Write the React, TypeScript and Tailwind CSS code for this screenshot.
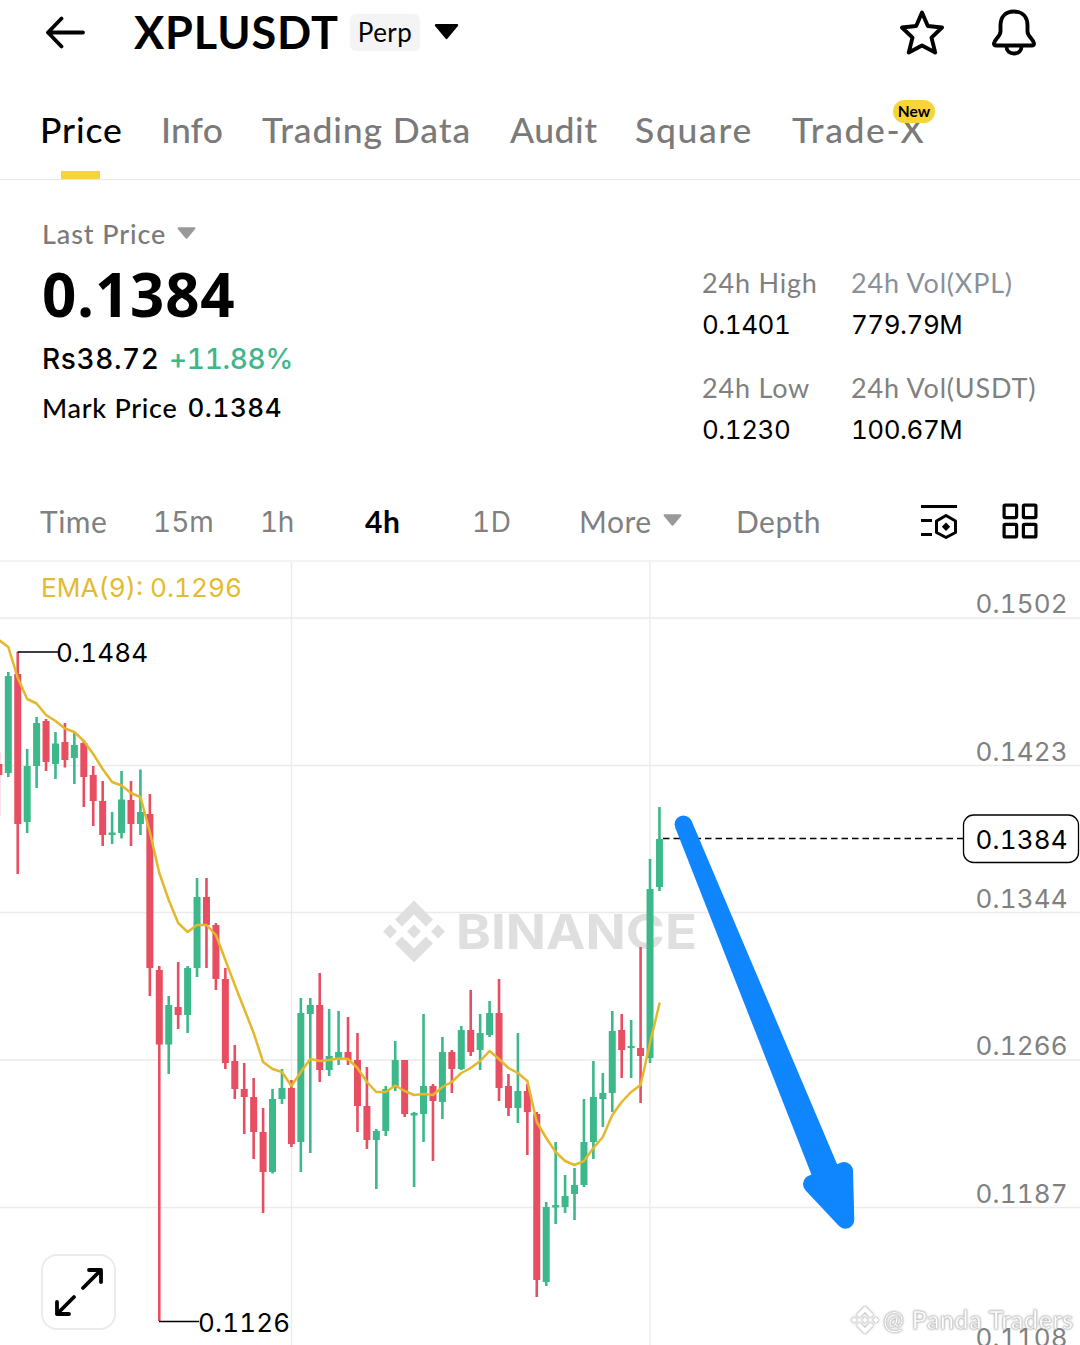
import React from 'react';
import { SiBinance } from 'react-icons/si';

type Candle = [up: number, high: number, top: number, bottom: number, low: number];

const STEP = 9.437;
const FIRST_X = 8.3;
const xOf = (i: number) => FIRST_X + (i - 1) * STEP;

// [up, high, body top, body bottom, low]
const candles: Candle[] = [
  [0, 752, 764, 775, 816], [1, 672, 676, 773, 777], [0, 652, 674, 824, 874], [1, 749, 766, 822, 833],
  [1, 717, 723, 766, 788], [0, 719, 721, 762, 771], [1, 732, 743.5, 764, 779], [0, 723, 742, 760, 767.5],
  [1, 732, 745, 758, 784], [0, 740, 743, 777, 807], [0, 766, 775, 801, 826], [0, 781, 801, 835, 846],
  [1, 812, 832.5, 835, 844], [1, 771, 799.5, 833, 838.5], [0, 781, 800, 824, 846], [1, 769.5, 812, 824, 835],
  [0, 794, 814, 968, 996], [0, 966, 970, 1044.5, 1321], [1, 996, 1005, 1044.5, 1074], [0, 962, 1007, 1015, 1029],
  [1, 966, 968, 1015, 1033], [1, 878, 897, 968, 977], [0, 878, 897, 925, 968], [0, 923, 925, 979, 990],
  [0, 968, 979, 1063, 1069], [0, 1045, 1061, 1089, 1099], [0, 1063, 1089, 1097, 1134], [0, 1078, 1097, 1132, 1159],
  [0, 1108, 1132, 1172, 1213], [1, 1089, 1099, 1172, 1173.5], [1, 1069, 1088, 1099, 1104], [0, 1080, 1088, 1144, 1147],
  [1, 998, 1013, 1142, 1172], [1, 998, 1005, 1014, 1153], [0, 973, 1005, 1070, 1082], [1, 1009, 1056, 1070, 1076],
  [1, 1011, 1052, 1059, 1065], [0, 1017, 1052, 1060, 1065], [0, 1033, 1060, 1106, 1132], [0, 1067, 1106, 1140, 1149],
  [1, 1129, 1131, 1140, 1189], [1, 1086, 1089, 1131, 1136], [1, 1041, 1060, 1088, 1091], [0, 1060, 1060, 1114, 1117],
  [1, 1112, 1113, 1115.5, 1187], [1, 1014, 1086, 1114, 1142], [0, 1084, 1086, 1101, 1161], [1, 1037, 1052, 1102, 1119],
  [0, 1050, 1052, 1069, 1093], [1, 1026, 1030, 1069, 1070], [0, 990, 1030, 1052, 1056], [1, 1014, 1033, 1050, 1070],
  [1, 1001, 1013, 1035, 1037], [0, 979, 1013, 1088, 1101], [0, 1074, 1086, 1108, 1116], [1, 1033, 1091, 1108, 1123],
  [0, 1084, 1091, 1112, 1155], [0, 1112, 1114, 1280, 1297], [1, 1202, 1207, 1282, 1286], [1, 1142, 1205, 1207.5, 1224],
  [1, 1175, 1196, 1207, 1213], [1, 1168, 1185, 1194, 1220], [1, 1099, 1142, 1185, 1187], [1, 1061, 1097, 1142, 1159],
  [1, 1073, 1093, 1099, 1127], [1, 1011, 1031, 1093, 1112], [0, 1014, 1030, 1050, 1078], [1, 1020, 1046, 1048, 1078],
  [0, 947, 1048, 1056, 1103], [1, 859, 889, 1058, 1063], [1, 807, 839, 887, 891],
];

const ema = [
  640, 647, 678, 699, 703.5, 715, 721, 728.5, 732, 741, 754, 769, 782, 785.5, 793, 797, 832, 873, 900, 923, 932, 925,
  925, 935, 960, 985, 1009, 1033, 1062, 1069, 1072, 1086, 1072, 1059, 1061, 1060, 1058.5, 1059, 1068, 1082, 1092, 1092,
  1085.5, 1091, 1095, 1094, 1095, 1087, 1082, 1073, 1068, 1061, 1051, 1059, 1068, 1073, 1081, 1122, 1138, 1152, 1161,
  1165, 1161, 1148, 1137, 1115, 1102, 1092, 1085, 1043, 1003.5,
];

const gridRows = [
  { y: 618, label: '0.1502' },
  { y: 765.5, label: '0.1423' },
  { y: 912.5, label: '0.1344' },
  { y: 1060, label: '0.1266' },
  { y: 1207.5, label: '0.1187' },
  { y: 1352, label: '0.1108' },
];

const tabs = [
  { name: 'Price', width: 'w-[82px]', tracking: 'tracking-[0.9px]' },
  { name: 'Info', width: 'w-[62px]', tracking: 'tracking-[0.1px]' },
  { name: 'Trading Data', width: 'w-[209px]', tracking: 'tracking-[0.9px]' },
  { name: 'Audit', width: 'w-[86px]', tracking: 'tracking-[0.5px]' },
  { name: 'Square', width: 'w-[118px]', tracking: 'tracking-[1.7px]' },
  { name: 'Trade-X', width: 'w-[132px]', tracking: 'tracking-[1.6px]' },
];

const Caret: React.FC<{ className?: string; width: number; height: number }> = ({ className, width, height }) => (
  <svg className={className} width={width} height={height} viewBox="0 0 24 16" fill="currentColor" stroke="currentColor">
    <path d="M2 2h20L12 14z" strokeWidth="2.5" strokeLinejoin="round" />
  </svg>
);

const Header = () => (
  <header className="flex h-[66px] items-center pb-0.5 pl-11 pr-[43px]">
    <svg width="42" height="34" viewBox="0 0 42 34" fill="none" stroke="#000" strokeWidth="3.8" strokeLinecap="round" strokeLinejoin="round">
      <path d="M39 17.500H4M17.500 3.500 4 17.500l13.500 14" />
    </svg>
    <h1 className="ml-12 w-[205px] whitespace-nowrap text-[45px] font-bold leading-none tracking-[0.9px]">XPLUSDT</h1>
    <span className="ml-[11px] flex h-[37px] w-[70px] items-center justify-center rounded-md bg-[#f4f4f4] text-[26px] tracking-[0.4px]">
      Perp
    </span>
    <Caret className="-mt-0.5 ml-[14px]" width={25} height={17} />
    <svg className="ml-auto" width="46" height="46" viewBox="0 0 46 46" fill="none" stroke="#000" strokeWidth="3.9" strokeLinejoin="round">
      <path d="M23 3.500 28.800 17 43 18.500 32.500 28.600 36.200 43.500 23 36.500 9.800 43.500 13.500 28.600 3 18.500 17.200 17z" />
    </svg>
    <svg className="ml-[46px]" width="46" height="50" viewBox="0 0 46 50" fill="none" stroke="#000" strokeWidth="3.9" strokeLinejoin="round">
      <path d="M23 4.500C14 4.500 9.500 10.500 9.500 18.500v6C9.500 29.500 4 31.500 3 36.500c-.1 1.500.7 2 2 2h36c1.300 0 2.100-.5 2-2-1-5-6.500-7-6.500-12v-6C36.500 10.500 32 4.500 23 4.500z" />
      <path d="M15.500 39.500c0 4.300 3 7 7.500 7s7.500-2.700 7.500-7" />
    </svg>
  </header>
);

const TabBar = () => (
  <nav className="flex h-[114px] gap-[39px] border-b border-[#e8e8e8] pl-10">
    {tabs.map((tab, i) => (
      <div
        key={tab.name}
        className={`relative flex h-full flex-col items-start whitespace-nowrap pt-[42px] text-[35.5px] font-medium leading-[44px] ${tab.width} ${tab.tracking} ${
          i === 0 ? 'text-black' : 'text-[#7a7a7a]'
        }`}
      >
        {tab.name}
        {i === 0 && <div className="ml-[21px] mt-auto h-2 w-[39px] bg-[#f8d33a]" />}
        {tab.name === 'Trade-X' && (
          <span className="absolute left-[101px] top-[34px] flex h-[23px] w-[42px] items-center justify-center rounded-full bg-[#f8d33a] text-[15.5px] font-bold leading-none tracking-normal text-black">
            New
          </span>
        )}
      </div>
    ))}
  </nav>
);

const Stat: React.FC<{ label: string; value: string; tint?: string }> = ({ label, value, tint = 'text-[#808080]' }) => (
  <div className="flex flex-col whitespace-nowrap">
    <span className={`text-[27px] leading-[36px] tracking-[0.8px] ${tint}`}>{label}</span>
    <span className="mt-1.5 font-[Inter,sans-serif] text-[26px] leading-[36px] tracking-[-0.5px] tabular-nums">{value}</span>
  </div>
);

const Summary = () => (
  <section className="flex h-[302px] justify-between pl-[42px] pt-[36px]">
    <div className="flex flex-col whitespace-nowrap">
      <div className="flex items-center text-[27px] font-medium leading-[36px] tracking-[0.9px] text-[#7a7a7a]">
        Last Price
        <Caret className="-mt-0.5 ml-[11px] text-[#999]" width={19} height={14} />
      </div>
      <div className="mt-2 font-['Open_Sans',sans-serif] text-[60px] font-bold leading-[68px] tracking-[0.8px]">0.1384</div>
      <div className="mt-[13px] flex font-[Inter,sans-serif] text-[28px] font-medium leading-[36px] tabular-nums">
        <span className="w-[117px] tracking-[0.6px]">Rs38.72</span>
        <span className="ml-2.5 tracking-[-0.3px] text-[#3fb68b]">+11.88%</span>
      </div>
      <div className="mt-[13px] flex text-[27px] font-medium leading-[36px] tracking-[0.7px]">
        Mark Price
        <span className="ml-2.5 font-[Inter,sans-serif] text-[26px] tracking-[0.6px] tabular-nums">0.1384</span>
      </div>
    </div>
    <div className="grid h-min grid-cols-[149px_229px] gap-y-[27px] pt-[49px]">
      <Stat label="24h High" value="0.1401" />
      <Stat label="24h Vol(XPL)" value="779.79M" tint="text-[#8a9099]" />
      <Stat label="24h Low" value="0.1230" />
      <Stat label="24h Vol(USDT)" value="100.67M" />
    </div>
  </section>
);

const Intervals = () => (
  <div className="flex h-[80px] items-center whitespace-nowrap border-b-2 border-[#f3f3f3] pl-10 text-[30px] tracking-[0.5px] text-[#808080]">
    <span className="w-[113px]">Time</span>
    <span className="w-[107px] pt-0.5 font-[Inter,sans-serif] text-[28px] tracking-normal tabular-nums">15m</span>
    <span className="w-[105px] pt-0.5 font-[Inter,sans-serif] text-[28px] tracking-[-0.5px] tabular-nums">1h</span>
    <span className="w-[107px] font-bold text-black">4h</span>
    <span className="w-[107px] pt-0.5 font-[Inter,sans-serif] text-[28px] tabular-nums">1D</span>
    <span className="flex w-[157px] items-center">
      More
      <Caret className="-mt-0.5 ml-[11px] text-[#999]" width={19} height={14} />
    </span>
    <span className="w-[184px]">Depth</span>
    <svg width="38" height="36" viewBox="0 0 38 36" fill="none" stroke="#000" strokeWidth="3">
      <path d="M1 3.500h36M1 17.500h11M1 31.500h11" />
      <path d="M26 12.500 35.500 18v11.500L26 34.500 16.500 29.500V18z" strokeLinejoin="round" />
      <path d="M26 19.500 30.200 23.700 26 27.900 21.800 23.700z" fill="#000" stroke="none" />
    </svg>
    <svg className="ml-11" width="36" height="36" viewBox="0 0 36 36" fill="none" stroke="#000" strokeWidth="3.2">
      <rect x="2.100" y="2.100" width="12.500" height="12.500" rx="1" />
      <rect x="21.400" y="2.100" width="12.500" height="12.500" rx="1" />
      <rect x="2.100" y="21.400" width="12.500" height="12.500" rx="1" />
      <rect x="21.400" y="21.400" width="12.500" height="12.500" rx="1" />
    </svg>
  </div>
);

const Chart = () => (
  <svg className="block font-[Inter,sans-serif] tabular-nums" width="1080" height="783" viewBox="0 562 1080 783" fontSize="26">
    {/* grid */}
    <g stroke="#ebebeb" strokeWidth="1.4">
      {gridRows.map(row => (
        <line key={row.label} x1="0" x2="1080" y1={row.y} y2={row.y} />
      ))}
      <line x1="291.500" x2="291.500" y1="562" y2="1345" />
      <line x1="650" x2="650" y1="562" y2="1345" />
    </g>

    {/* watermark */}
    <g fill="#dfdfdf" color="#dfdfdf">
      <SiBinance x={383} y={900.5} size={62} />
      <text x="456" y="949" fontSize="48" fontWeight="700" textLength="241" lengthAdjust="spacingAndGlyphs">
        BINANCE
      </text>
    </g>

    {/* candles */}
    {candles.map(([up, high, top, bottom, low], i) => (
      <g key={i} fill={up ? '#3cb88a' : '#e84e62'}>
        <rect x={xOf(i) - 1.3} y={high} width="2.600" height={low - high} />
        <rect x={xOf(i) - 3.5} y={top} width="7" height={bottom - top} />
      </g>
    ))}

    <polyline
      points={ema.map((y, i) => `${xOf(i)},${y}`).join(' ')}
      fill="none"
      stroke="#e3b82a"
      strokeWidth="2.500"
      strokeLinejoin="round"
      strokeLinecap="round"
    />

    {/* high / low markers */}
    <path d="M17.500 652H58M159 1321.500H199" stroke="#000" strokeWidth="1.500" />
    <text x="56" y="662" textLength="92">0.1484</text>
    <text x="198" y="1332" textLength="92">0.1126</text>

    <text x="41" y="597" fontSize="26" fill="#e3bb30" textLength="201" lengthAdjust="spacingAndGlyphs">
      EMA(9): 0.1296
    </text>

    {/* axis */}
    <g fill="#808080">
      {gridRows.map(row => (
        <text key={row.label} x="975.500" y={row.label === '0.1108' ? 1347 : row.y - 5} textLength="92">{row.label}</text>
      ))}
    </g>
    <line x1="663" x2="963" y1="838.500" y2="838.500" stroke="#000" strokeWidth="1.600" strokeDasharray="6.500 4" />
    <rect x="963.500" y="815" width="115" height="47.500" rx="10" fill="#fff" stroke="#000" strokeWidth="1.300" />
    <text x="975.500" y="849" textLength="92">0.1384</text>

    {/* drawn arrow */}
    <g fill="#1086fe" stroke="#1086fe">
      <circle cx="683.400" cy="824.300" r="8.800" stroke="none" />
      <path d="M675.200 827.600 691.600 821 837 1164 840 1190 818 1190 812 1176z" stroke="none" />
      <path d="M812 1184 844 1171 845.300 1219.700z" strokeWidth="18" strokeLinejoin="round" />
    </g>

    {/* author mark */}
    <g className="drop-shadow-[0_0_1px_#999]" fill="#fff">
      <SiBinance x={851} y={1306} size={28} color="#fff" stroke="#cfcfcf" strokeWidth="0.5" />
      <text x="883" y="1329" fontSize="25" stroke="#cfcfcf" strokeWidth="0.5" textLength="190" className="font-[Lato,sans-serif]">
        @ Panda Traders
      </text>
    </g>
  </svg>
);

export default function App() {
  return (
    <div className="w-[1080px] overflow-hidden bg-white font-[Lato,sans-serif] text-black">
      <Header />
      <TabBar />
      <Summary />
      <Intervals />
      <div className="relative">
        <Chart />
        <button className="absolute left-[41px] top-[692px] flex h-[76px] w-[75px] items-center justify-center rounded-2xl border-2 border-[#ebebeb] bg-white">
          <svg width="52" height="52" viewBox="0 0 52 52" fill="none" stroke="#000" strokeWidth="3.800" strokeLinecap="round" strokeLinejoin="round">
            <path d="M30 22 48 4M36 4H48V16M21 31 4 48M4 36V48H16" />
          </svg>
        </button>
      </div>
    </div>
  );
}
